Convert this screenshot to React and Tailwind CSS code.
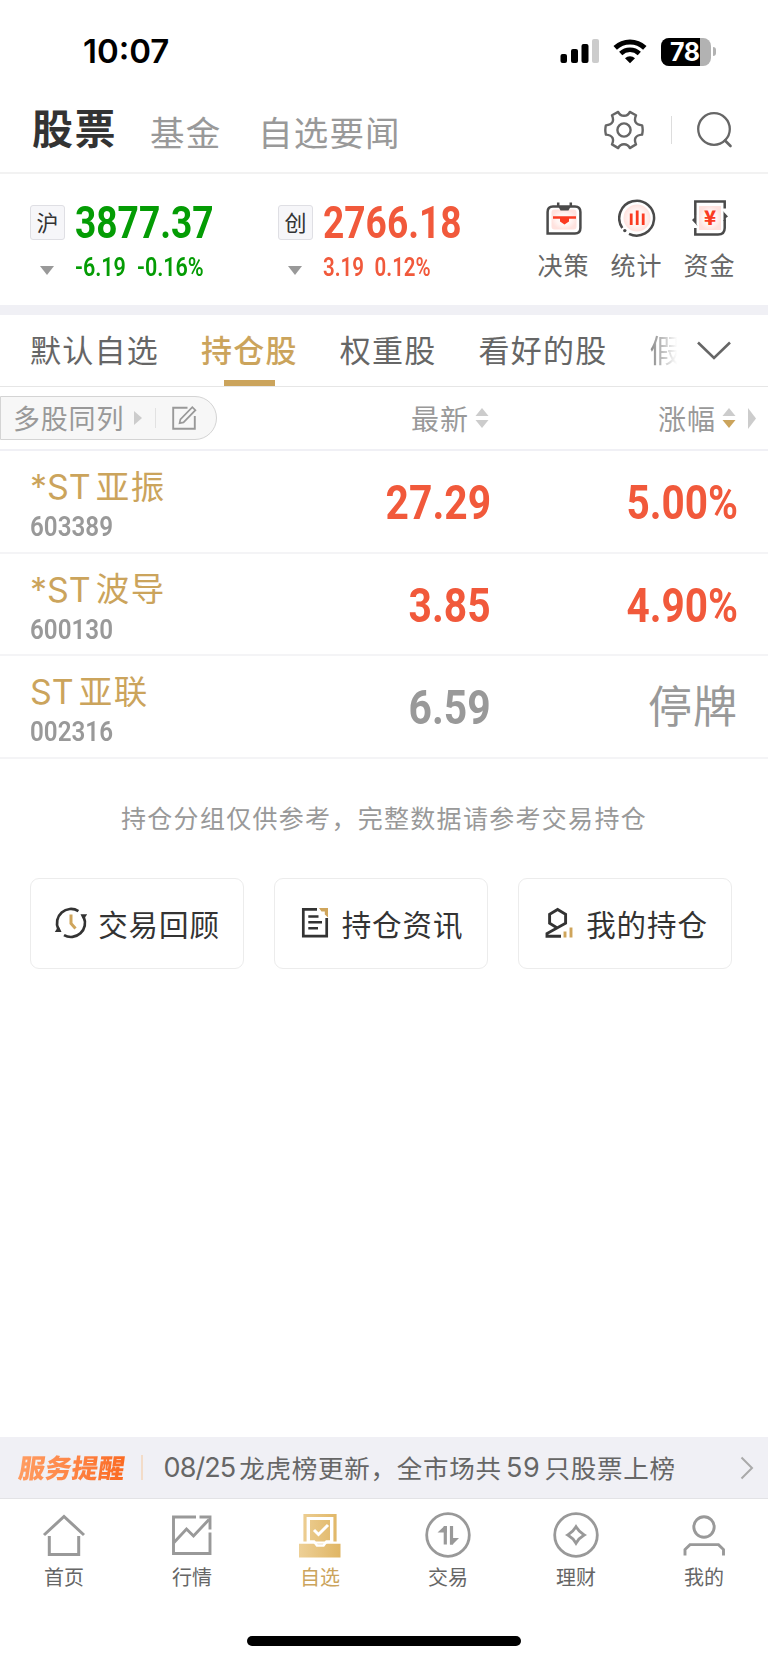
import React, { useState } from "react";

const indices = [
  { tag: "沪", value: "3877.37", change: "-6.19", percent: "-0.16%", color: "text-[#049c04]", squeeze: "scale-x-[0.86] gap-[13px]" },
  { tag: "创", value: "2766.18", change: "3.19", percent: "0.12%", color: "text-[#f1593b]", squeeze: "scale-x-[0.82] gap-[13px]" },
];

const groups = ["默认自选", "持仓股", "权重股", "看好的股", "假"];

const stocks = [
  { prefix: "*ST", name: "亚振", code: "603389", price: "27.29", change: "5.00%" },
  { prefix: "*ST", name: "波导", code: "600130", price: "3.85", change: "4.90%" },
  { prefix: "ST", name: "亚联", code: "002316", price: "6.59", change: "停牌", halted: true },
];

const SignalIcon = () => (
  <svg width="39" height="25" viewBox="0 0 39 25">
    <rect x="0.5" y="15" width="6.5" height="9" rx="2" />
    <rect x="11" y="10" width="7" height="14" rx="2" />
    <rect x="21.5" y="5" width="7" height="19" rx="2" />
    <rect x="32" y="0" width="7" height="24" rx="2" fill="#cccccc" />
  </svg>
);

const WifiIcon = () => (
  <svg width="34" height="25" viewBox="0 0 34 25" fill="none" stroke="#000">
    <path d="M2.2 8.9A21.5 21.5 0 0 1 31.8 8.9" strokeWidth="5" />
    <path d="M7.7 14.5A13.5 13.5 0 0 1 26.3 14.5" strokeWidth="4.6" />
    <path d="M17 24.3l-5-5.1a7.4 7.4 0 0 1 10 0z" fill="#000" stroke="none" />
  </svg>
);

const Battery = () => (
  <div className="flex items-center">
    <div className="relative flex h-[28px] w-[50px] items-center overflow-hidden rounded-[8px] bg-[#b2b2b2]">
      <div className="h-full w-[39px] bg-black" />
      <span className="absolute left-[9px] top-0 font-['Inter'] text-[25px] font-bold leading-[28px] tracking-[-0.5px] text-white">
        78
      </span>
    </div>
    <div className="ml-[2px] h-[9px] w-[3px] rounded-r-full bg-[#b2b2b2]" />
  </div>
);

const GearIcon = () => (
  <svg width="40" height="40" viewBox="0 0 40 40" fill="none" stroke="#666" strokeWidth="2.4" strokeLinejoin="round">
    <path d="M14.2 1.9 8 5.2C10.2 10.5 9.2 14.8 1.9 15.4Q.7 20 1.9 24.6C9.2 25.2 10.2 29.5 8 34.4L14.2 38.1C16.5 33 23.5 33 25.8 38.1L32 34.4C29.8 29.5 30.8 25.2 38.1 24.6Q39.3 20 38.1 15.4C30.8 14.8 29.8 10.5 32 5.2L25.8 1.9C23.5 7 16.5 7 14.2 1.9Z" />
    <circle cx="20" cy="20" r="6.6" />
  </svg>
);

const SearchIcon = () => (
  <svg width="38" height="38" viewBox="0 0 38 38" fill="none" stroke="#666" strokeWidth="2.3" strokeLinecap="round">
    <circle cx="18" cy="18" r="15.8" />
    <path d="M29 29.5l5.5 5.5" strokeWidth="2.6" />
  </svg>
);

const GlowDefs = () => (
  <defs>
    <radialGradient id="glow">
      <stop offset="0" stopColor="#fff" />
      <stop offset="0.6" stopColor="#fff4f2" />
      <stop offset="1" stopColor="#ffe2de" />
    </radialGradient>
  </defs>
);

const DecisionIcon = () => (
  <svg width="36" height="36" viewBox="0 0 36 36" fill="none">
    <GlowDefs />
    <rect x="5.5" y="9.5" width="25" height="20" rx="3" fill="url(#glow)" />
    <path d="M1.6 33.5V12Q1.6 6.5 7 6.5H29Q34.4 6.5 34.4 12V28Q34.4 33.5 29 33.5Z" stroke="#4a4a4a" strokeWidth="2.5" />
    <path d="M12.2 2.5V7M24.8 2.5V7" stroke="#4a4a4a" strokeWidth="2.5" />
    <path d="M12 6H25L22.5 10.5H14.5Z" fill="#4a4a4a" />
    <path d="M7 16.3H30V18.7H23V21.5L18.5 24.5 14 21.5V18.7H7Z" fill="#fb3b22" />
  </svg>
);

const StatsIcon = () => (
  <svg width="38" height="38" viewBox="0 0 38 38" fill="none">
    <circle cx="19" cy="19" r="13.5" fill="url(#glow)" />
    <path d="M4.3 29A17.4 17.4 0 1 1 11 34.8" stroke="#4a4a4a" strokeWidth="2.5" />
    <circle cx="6.8" cy="31.6" r="1.7" fill="#4a4a4a" />
    <path d="M13.2 14.5V26M19.2 11.5V26M25.2 14.5V26" stroke="#fb3b22" strokeWidth="2.8" />
  </svg>
);

const FundsIcon = () => (
  <svg width="38" height="38" viewBox="0 0 38 38" fill="none">
    <rect x="8" y="7" width="22" height="24" fill="url(#glow)" />
    <path d="M4.3 16V2.5H33.7V9.5" stroke="#4a4a4a" strokeWidth="2.5" />
    <path d="M33.7 21V29Q33.7 35.5 27 35.5H4.3V29" stroke="#4a4a4a" strokeWidth="2.5" />
    <path d="M31.5 11.5L37 17.5 34.9 19V22H32.5V13ZM6.5 27L1 21 3.1 19V16H5.5V25Z" fill="#4a4a4a" />
    <text x="19" y="26" textAnchor="middle" fill="#fb3b22" className="font-['Noto_Sans_CJK_SC'] text-[20px] font-black">
      ¥
    </text>
  </svg>
);

const tools = [
  { label: "决策", icon: <DecisionIcon /> },
  { label: "统计", icon: <StatsIcon /> },
  { label: "资金", icon: <FundsIcon /> },
];

const EditIcon = () => (
  <svg width="25" height="26" viewBox="0 0 25 26" fill="none" stroke="#999" strokeWidth="1.9">
    <path d="M15.5 2.7H1.2V23.8H22.8V11" />
    <path d="M7.6 18.2L8.4 14.3 20.3 2.2 23.4 5.2 11.5 17.4Z" strokeWidth="1.7" />
  </svg>
);

const SortIcon = ({ down = "#cccccc" }) => (
  <svg width="14" height="20" viewBox="0 0 14 20">
    <path d="M7 0L13.5 8H0.5Z" fill="#cccccc" />
    <path d="M7 20L13.5 12H0.5Z" fill={down} />
  </svg>
);

const ReviewIcon = () => (
  <svg width="34" height="34" viewBox="0 0 34 34" fill="none" stroke="#333" strokeWidth="2.7">
    <path d="M24.4 5.1A14 14 0 0 0 4.3 22.9" />
    <path d="M10 29.1A14 14 0 0 0 29.7 11.1" />
    <path d="M.8 26H7.5L5.5 21.5 3 22.5ZM33.2 8.3H26.5L28.5 12.5 31 11.5Z" fill="#333" stroke="none" />
    <path d="M17 8.5V17.5L21.5 22.5" stroke="#cfa55b" strokeWidth="3" />
  </svg>
);

const NewsIcon = () => (
  <svg width="28" height="34" viewBox="0 0 28 34" fill="none" stroke="#333" strokeWidth="2.7">
    <path d="M16 3.3H2.3V30.2H25.7V12" />
    <path d="M7.3 10.5H17.5M7.3 16.3H21M7.3 22.2H17" strokeWidth="2.4" />
    <path d="M18 2H27V11.5L23.8 8.5V5.5H20.5Z" fill="#cfa55b" stroke="none" />
  </svg>
);

const HoldingIcon = () => (
  <svg width="30" height="34" viewBox="0 0 30 34" fill="none" stroke="#333" strokeWidth="2.9">
    <path d="M17 30.2H3V27.6L21.6 17.2V8.2L13.6 3.4 5.6 8.2V17.2L12.5 21.4" />
    <path d="M21 25.5V31.5M27 21.5V31.5" stroke="#cfa55b" />
  </svg>
);

const shortcuts = [
  { label: "交易回顾", icon: <ReviewIcon />, gap: "gap-[10px]" },
  { label: "持仓资讯", icon: <NewsIcon />, gap: "gap-[13px] pl-[2px]" },
  { label: "我的持仓", icon: <HoldingIcon />, gap: "gap-[12px] pl-[2px]" },
];

const HomeIcon = () => (
  <svg width="46" height="46" viewBox="0 0 46 46" fill="none" stroke="#999" strokeWidth="3">
    <path d="M3 23L23 4.5 43 23" />
    <path d="M8.3 24V42.5H37.7V24" />
  </svg>
);

const MarketIcon = () => (
  <svg width="46" height="46" viewBox="0 0 46 46" fill="none" stroke="#999" strokeWidth="2.9">
    <path d="M27 5H4.5V41.5H41V20.5" />
    <path d="M5 30.5L17.5 17 24.5 24 40 7.5" />
    <path d="M30.5 5H41V17.5" />
  </svg>
);

const WatchIcon = () => (
  <svg width="46" height="46" viewBox="0 0 46 46" fill="none">
    <defs>
      <linearGradient id="gold" x1="0" y1="0" x2="46" y2="0" gradientUnits="userSpaceOnUse">
        <stop offset="0" stopColor="#eed199" />
        <stop offset="1" stopColor="#dfb461" />
      </linearGradient>
    </defs>
    <path d="M8 29.5V3.5H38V29.5" stroke="url(#gold)" strokeWidth="3.2" />
    <path d="M13 8H33V29.5H13Z" fill="url(#gold)" />
    <path d="M2 31.7H43.5V45.5H2Z" fill="url(#gold)" />
    <path d="M13 29.5H17L20 33.5H26.5L29.5 29.5H34" stroke="#fff" strokeWidth="2.6" />
    <path d="M17 18L21.5 22.5 31 13" stroke="#fff" strokeWidth="3" />
  </svg>
);

const TradeIcon = () => (
  <svg width="46" height="46" viewBox="0 0 46 46" fill="none" stroke="#999">
    <circle cx="23" cy="23" r="21.3" strokeWidth="2.8" />
    <path d="M20.3 14V32.5M26.5 14V32.5" strokeWidth="3.2" />
    <path d="M12.5 20.5L19.5 14H21.9V20.5ZM34 26H25V32.5H27.5Z" fill="#999" stroke="none" />
  </svg>
);

const WealthIcon = () => (
  <svg width="46" height="46" viewBox="0 0 46 46" fill="none" stroke="#999" strokeWidth="2.8">
    <circle cx="23" cy="23" r="21.3" />
    <path d="M23 14.8Q26 20 31.2 23 26 26 23 31.2 20 26 14.8 23 20 20 23 14.8Z" />
  </svg>
);

const MineIcon = () => (
  <svg width="46" height="46" viewBox="0 0 46 46" fill="none" stroke="#999" strokeWidth="2.9">
    <circle cx="23" cy="15" r="10.2" />
    <path d="M4 43.5V37.5L9 32.6H37.5L42.5 37.5V43.5" />
  </svg>
);

const navItems = [
  { label: "首页", icon: <HomeIcon /> },
  { label: "行情", icon: <MarketIcon /> },
  { label: "自选", icon: <WatchIcon /> },
  { label: "交易", icon: <TradeIcon /> },
  { label: "理财", icon: <WealthIcon /> },
  { label: "我的", icon: <MineIcon /> },
];

const StatusBar = () => (
  <div className="flex h-[103px] shrink-0 items-center justify-between pl-[83px] pr-[52px]">
    <span className="font-['Inter'] text-[33px] font-semibold leading-none">10:07</span>
    <div className="flex items-center">
      <SignalIcon />
      <div className="ml-[14px] mr-[14px]">
        <WifiIcon />
      </div>
      <Battery />
    </div>
  </div>
);

const IndexCard = ({ item }) => (
  <div className="w-[248px]">
    <div className="flex h-[35px] items-center">
      <span className="flex size-[35px] items-center justify-center rounded-[3px] border-[1.5px] border-[#dfdfe4] bg-[#f6f6f9] text-[22px] text-[#333]">
        <span className="-mt-[3px] leading-[32px]">{item.tag}</span>
      </span>
      <span className={`ml-[10px] w-[140px] origin-left scale-x-[0.825] whitespace-nowrap font-['Roboto'] text-[45px] font-bold leading-none ${item.color}`}>
        {item.value}
      </span>
    </div>
    <div className="mt-[14px] flex h-[26px] items-center">
      <svg className="ml-[10px] mt-[7px]" width="14" height="9" viewBox="0 0 14 9">
        <path d="M0 0H14L7 9Z" fill="#999" />
      </svg>
      <span className={`ml-[21px] flex origin-left whitespace-nowrap font-['Roboto'] text-[25px] font-semibold leading-none ${item.squeeze} ${item.color}`}>
        <span>{item.change}</span>
        <span>{item.percent}</span>
      </span>
    </div>
  </div>
);

const StockRow = ({ stock }) => (
  <div className="flex h-[102.5px] shrink-0 border-b-2 border-[#f4f4f6] pl-[30px] pr-[30px]">
    <div className="w-[230px]">
      <div className="mt-[16px] flex h-[40px] items-center gap-[5px] text-[#cba45c]">
        <span className="font-['Inter'] text-[34px] leading-[40px]">{stock.prefix}</span>
        <span className="-mt-[5px] text-[33.5px] leading-[36px] tracking-[1.5px]">{stock.name}</span>
      </div>
      <div className="mt-[5px] origin-left scale-x-[0.88] font-['Roboto'] text-[27.5px] font-semibold leading-[30px] text-[#999]">
        {stock.code}
      </div>
    </div>
    <div className={`flex w-[231px] items-center justify-end pt-[4px] ${stock.halted ? "text-[#999]" : "text-[#f1593b]"}`}>
      <span className="origin-right scale-x-[0.85] font-['Roboto'] text-[48px] font-bold leading-none">
        {stock.price}
      </span>
    </div>
    <div className={`flex flex-1 items-center justify-end ${stock.halted ? "text-[#999]" : "text-[#f1593b]"}`}>
      {stock.halted ? (
        <span className="-mt-[4px] text-[44px] leading-none tracking-[1px]">{stock.change}</span>
      ) : (
        <span className="mt-[4px] origin-right scale-x-[0.845] whitespace-nowrap font-['Roboto'] text-[48px] font-bold leading-none">
          {stock.change}
        </span>
      )}
    </div>
  </div>
);

const App = () => {
  const [group, setGroup] = useState("持仓股");
  const [tab, setTab] = useState("自选");

  return (
    <div className="flex h-[1663px] w-[768px] flex-col overflow-hidden bg-white font-['Noto_Sans_CJK_SC',sans-serif] text-black">
      <StatusBar />

      <header className="flex h-[71px] shrink-0 items-center border-b-2 border-[#f2f2f2] pb-[16px] pl-[32px] pr-[34px]">
        <h1 className="-mt-[8px] w-[118px] text-[41px] font-bold leading-[56px] tracking-[1.5px] text-[#333]">股票</h1>
        <span className="mt-[2px] w-[108px] text-[34.5px] leading-[48px] tracking-[1.2px] text-[#999]">基金</span>
        <span className="mt-[2px] text-[34.5px] leading-[48px] tracking-[1.2px] text-[#999]">自选要闻</span>
        <div className="ml-auto flex items-center">
          <GearIcon />
          <div className="ml-[27px] mr-[24px] h-[28px] w-px bg-[#ddd]" />
          <SearchIcon />
        </div>
      </header>

      <section className="flex h-[131px] shrink-0 pl-[30px] pr-[22px] pt-[31px]">
        {indices.map((item) => (
          <IndexCard key={item.tag} item={item} />
        ))}
        <div className="-mt-[6px] ml-auto flex">
          {tools.map((tool) => (
            <button key={tool.label} className="flex w-[73px] flex-col items-center">
              <span className="flex h-[38px] items-center">{tool.icon}</span>
              <span className="mt-[11px] text-[25px] leading-[32px] tracking-[1px] text-[#666]">{tool.label}</span>
            </button>
          ))}
        </div>
      </section>

      <div className="h-[10px] shrink-0 bg-[#f0f0f5]" />

      <nav className="flex h-[72px] shrink-0 border-b-[1.5px] border-[#e6e6e6] pl-[30px]">
        <div className="flex h-[71px] w-[656px] gap-[42px] whitespace-nowrap">
          {groups.map((name) => (
            <button
              key={name}
              onClick={() => setGroup(name)}
              className={`flex shrink-0 flex-col items-center text-[31px] leading-[44px] tracking-[1.25px] ${
                name === group
                  ? "font-medium text-[#cba45c]"
                  : name === "假"
                    ? "bg-linear-to-r from-[#888] to-transparent to-85% bg-clip-text text-transparent"
                    : "text-[#666]"
              }`}
            >
              <span className="mt-[12px]">{name}</span>
              {name === group && <span className="mt-auto h-[6px] w-[51px] bg-[#cba45c]" />}
            </button>
          ))}
        </div>
        <svg className="ml-[10px] mt-[25px]" width="36" height="22" viewBox="0 0 36 22" fill="none" stroke="#666" strokeWidth="2.6">
          <path d="M2 2.5L18 18 34 2.5" />
        </svg>
      </nav>

      <div className="flex h-[64px] shrink-0 items-center border-b-2 border-[#f0f0f5] pr-[12px] text-[#999]">
        <div className="flex h-[44px] w-[217px] items-center rounded-r-full border-[1.5px] border-[#d4d4d4] bg-[#f7f7f7] pl-[12px]">
          <span className="text-[27px] leading-[40px] tracking-[0.8px]">多股同列</span>
          <svg className="ml-[10px]" width="8" height="14" viewBox="0 0 8 14">
            <path d="M0 0L8 7 0 14Z" fill="#ccc" />
          </svg>
          <div className="ml-[13px] mr-[16px] h-[20px] w-px bg-[#e2e2e2]" />
          <EditIcon />
        </div>
        <div className="ml-[194px] flex items-center gap-[6px]">
          <span className="text-[28px] leading-[40px] tracking-[1px]">最新</span>
          <SortIcon />
        </div>
        <div className="ml-auto flex items-center gap-[6px]">
          <span className="text-[28px] leading-[40px] tracking-[1px]">涨幅</span>
          <SortIcon down="#cba45c" />
          <svg className="ml-[6px]" width="8" height="21" viewBox="0 0 8 21">
            <path d="M0 0L8 10.5 0 21Z" fill="#ccc" />
          </svg>
        </div>
      </div>

      {stocks.map((stock) => (
        <StockRow key={stock.code} stock={stock} />
      ))}

      <p className="mt-[40px] text-center text-[25px] leading-[36px] tracking-[1.3px] text-[#999]">
        持仓分组仅供参考，完整数据请参考交易持仓
      </p>

      <div className="mt-[43px] flex gap-[30px] px-[30px]">
        {shortcuts.map((item) => (
          <button
            key={item.label}
            className={`flex h-[91px] w-[214px] shrink-0 items-center justify-center rounded-[9px] border-[1.5px] border-[#ececec] text-[#333] ${item.gap}`}
          >
            {item.icon}
            <span className="-mt-px text-[29.5px] leading-[40px] tracking-[0.9px]">{item.label}</span>
          </button>
        ))}
      </div>

      <div className="mt-auto flex h-[62px] shrink-0 items-center border-b border-[#e3e3e6] bg-[#f0f0f5] pl-[19px] pr-[14px]">
        <span className="-mt-[2px] -skew-x-[8deg] bg-linear-to-r from-[#ff9d62] to-[#fb6a20] bg-clip-text text-[26.5px] font-black leading-[40px] text-transparent">
          服务提醒
        </span>
        <div className="ml-[16px] mr-[21px] h-[25px] w-[1.5px] bg-[#f3dcc8]" />
        <div className="flex items-center gap-[4px] text-[25.5px] leading-[40px] tracking-[0.75px] text-[#666]">
          <span className="font-['Inter'] text-[27px] tracking-[-0.9px]">08/25</span>
          <span className="-mt-[2px]">龙虎榜更新，全市场共</span>
          <span className="font-['Inter'] text-[27px]">59</span>
          <span className="-mt-[2px]">只股票上榜</span>
        </div>
        <svg className="ml-auto" width="14" height="24" viewBox="0 0 14 24" fill="none" stroke="#aaa" strokeWidth="2">
          <path d="M1.5 1.5L12 12 1.5 22.5" />
        </svg>
      </div>

      <footer className="flex h-[164px] shrink-0 flex-col items-center justify-between pb-[17px] pt-[13px]">
        <div className="grid w-full grid-cols-6">
          {navItems.map((item) => (
            <button
              key={item.label}
              onClick={() => setTab(item.label)}
              className={`flex flex-col items-center text-[20px] leading-[28px] ${item.label === tab ? "text-[#cba45c]" : "text-[#666]"}`}
            >
              {item.icon}
              <span className="mt-[5px]">{item.label}</span>
            </button>
          ))}
        </div>
        <div className="h-[10px] w-[274px] rounded-full bg-black" />
      </footer>
    </div>
  );
};

export default App;
